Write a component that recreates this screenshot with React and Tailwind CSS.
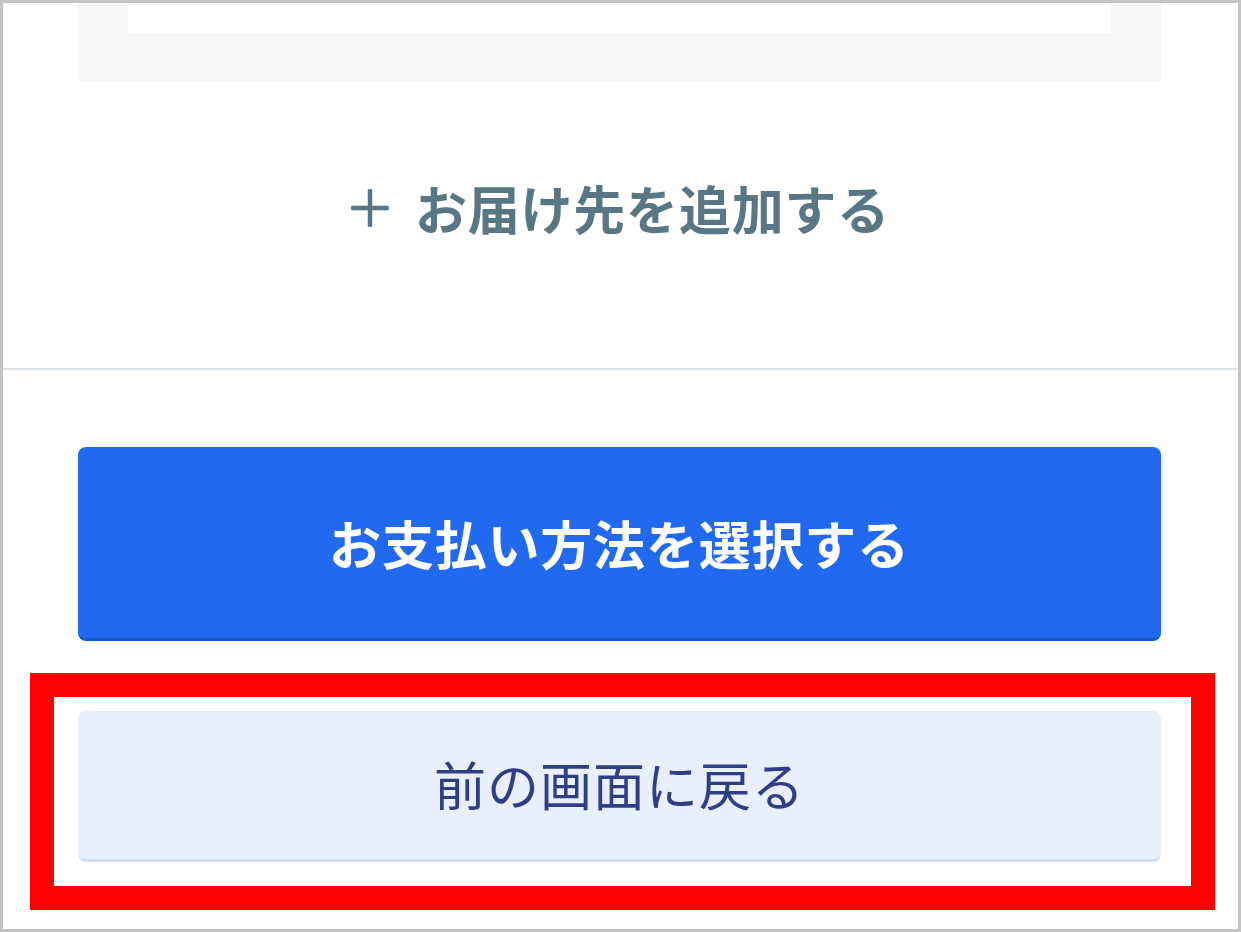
import React from "react";

export default function App() {
  const font = { fontFamily: '"Noto Sans CJK JP", "Noto Sans", sans-serif' };
  return (
    <div
      className="relative w-[1241px] h-[932px] bg-white border-[3px] border-[#c4c4c4] flex flex-col overflow-hidden"
      style={font}
    >
      {/* top card remnant */}
      <div className="ml-[75px] mr-[77px] h-[78px] bg-[#f5f7f7] px-[50px]">
        <div className="h-[30px] bg-white" />
      </div>

      {/* add address */}
      <div className="h-[287px] flex items-center justify-center gap-[26px] pb-[34px] text-[#587684]">
        <svg width="38" height="38" viewBox="0 0 38 38" className="shrink-0">
          <path d="M19 2v34M2 19h34" stroke="#587684" strokeWidth="4.5" strokeLinecap="round" />
        </svg>
        <span className="text-[52px] font-bold leading-none tracking-[0.8px]">お届け先を追加する</span>
      </div>

      <div className="h-[2px] bg-[#dce3e8]" />

      <div className="ml-[75px] mr-[77px] mt-[77px] h-[194px] rounded-[8px] bg-[#216aef] border-b-[3px] border-[#1a57c6] flex items-center justify-center">
        <span className="text-white text-[52px] font-bold leading-none tracking-[0.8px]">お支払い方法を選択する</span>
      </div>

      <div className="ml-[75px] mr-[77px] mt-[70px] h-[151px] rounded-[8px] bg-[#e8effd] border-b-[3px] border-[#d3dff9] flex items-center justify-center pb-[2px]">
        <span className="text-[#2e3f85] text-[52px] font-normal leading-none tracking-[1px]">前の画面に戻る</span>
      </div>

      {/* red annotation frame */}
      <div className="absolute left-[27px] top-[670px] w-[1185px] h-[237px] border-[24px] border-[#ff0000] pointer-events-none" />
    </div>
  );
}
